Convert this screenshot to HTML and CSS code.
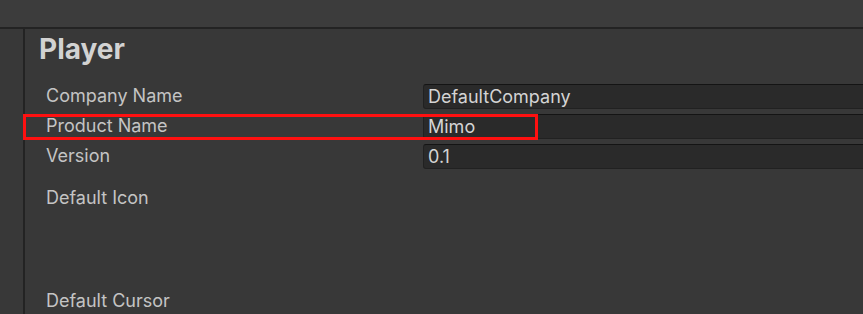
FILE: index.html
```html
<!DOCTYPE html>
<html lang="en">
<head>
    <meta charset="UTF-8">
    <title>Player Settings</title>
    <link rel="stylesheet" href="styles.css">
</head>
<body>
    <div class="toolbar"></div>
    <div class="main">
        <div class="gutter"></div>
        <div class="inspector">
            <h1 class="title">Player</h1>

            <div class="row">
                <span class="label">Company Name</span>
                <div class="field">DefaultCompany</div>
            </div>
            <div class="row">
                <span class="label">Product Name</span>
                <div class="field">Mimo</div>
                <div class="highlight"></div>
            </div>
            <div class="row">
                <span class="label">Version</span>
                <div class="field">0.1</div>
            </div>

            <div class="row tall">
                <span class="label">Default Icon</span>
            </div>
            <div class="row plain">
                <span class="label">Default Cursor</span>
            </div>
        </div>
    </div>
</body>
</html>
```

FILE: styles.css
```css
body {
    margin: 0;
    background-color: #383838;
    color: #c4c4c4;
    font-family: Inter, "Noto Sans", sans-serif;
    height: 314px;
    overflow: hidden;
}

.toolbar {
    height: 27px;
    background-color: #3c3c3c;
    border-bottom: 2px solid #232323;
}

.main {
    display: flex;
    height: 285px;
}

.gutter {
    width: 23px;
    flex-shrink: 0;
    border-right: 2px solid #232323;
}

.inspector {
    flex: 1;
    min-width: 0;
}

.title {
    margin: 0;
    height: 52px;
    padding-left: 14px;
    font-size: 28px;
    font-weight: 700;
    line-height: 40px;
    color: #d2d2d2;
}

.row {
    position: relative;
    display: flex;
    align-items: center;
    height: 30px;
}

.label {
    width: 377px;
    flex-shrink: 0;
    padding-left: 21px;
    font-size: 18px;
    line-height: 22px;
}

.field {
    flex: 1;
    height: 23px;
    margin-right: -10px;
    padding-left: 4px;
    background-color: #2a2a2a;
    border: 1px solid #212121;
    border-top-color: #141414;
    border-radius: 3px;
    color: #d4d4d4;
    font-size: 18px;
    line-height: 23px;
}

.row.tall {
    height: 119px;
    align-items: flex-start;
    padding-top: 16px;
    box-sizing: border-box;
}

.row.plain {
    height: 22px;
}

.highlight {
    position: absolute;
    left: -2px;
    top: 3px;
    width: 509px;
    height: 20px;
    border: 3px solid #ff1010;
}
```
